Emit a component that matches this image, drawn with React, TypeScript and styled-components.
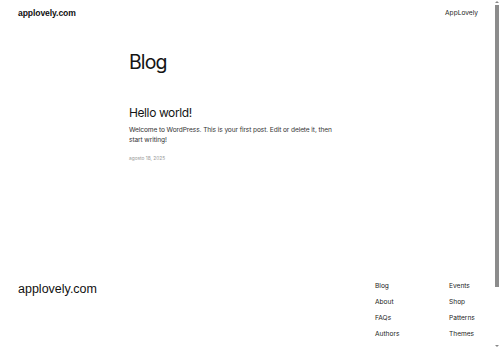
import { createGlobalStyle, styled } from "styled-components";

const GlobalStyle = createGlobalStyle`
  body {
    margin: 0;
    background: #fff;
    color: #111;
    font-family: Inter, "Noto Sans", sans-serif;
  }
`;

const Page = styled.div`
  position: relative;
  display: flex;
  flex-direction: column;
  height: 348px;
  overflow: hidden;
`;

const Header = styled.header`
  display: flex;
  justify-content: space-between;
  align-items: center;
  padding: 7px 22px 0 18px;
  height: 12px;
`;

const SiteTitle = styled.a<{ $large?: boolean }>`
  font-family: "Liberation Sans", Arial, sans-serif;
  font-size: ${(p) => (p.$large ? "12.5px" : "8.6px")};
  font-weight: ${(p) => (p.$large ? 500 : 700)};
  color: #111;
  text-decoration: none;
  letter-spacing: ${(p) => (p.$large ? "0" : "-0.1px")};
`;

const NavLink = styled.a`
  font-size: 6.6px;
  color: #222;
  text-decoration: none;
`;

const Main = styled.main`
  width: 244px;
  margin: 0 auto;
  padding: 32px 0 0 2px;
  flex: 1;
`;

const PageTitle = styled.h1`
  margin: 0;
  font-size: 19.5px;
  font-weight: 400;
  letter-spacing: -0.9px;
  line-height: 22px;
  color: #151515;
`;

const Post = styled.article`
  margin-top: 33px;
`;

const PostTitle = styled.h2`
  margin: 0;
  font-size: 12px;
  font-weight: 400;
  letter-spacing: -0.4px;
  line-height: 14px;
  color: #151515;
`;

const Excerpt = styled.p`
  margin: 5px 0 0;
  font-size: 6.6px;
  line-height: 10px;
  color: #333;
  width: 212px;
  letter-spacing: -0.1px;
`;

const PostDate = styled.time`
  display: block;
  margin-top: 10px;
  font-size: 4.8px;
  color: #999;
`;

const Footer = styled.footer`
  display: flex;
  justify-content: space-between;
  padding: 0 11px 0 18px;
  height: 77px;
`;

const FooterBrand = styled.div`
  padding-top: 6px;
`;

const FooterNav = styled.nav`
  display: grid;
  grid-template-columns: 74px 40px;
  row-gap: 8px;
  padding-top: 11px;
  align-content: start;
`;

const Scrollbar = styled.div`
  position: absolute;
  top: 0;
  right: 0;
  bottom: 0;
  width: 6px;
  display: flex;
  flex-direction: column;
  align-items: center;
  padding: 1px 0;
  box-sizing: border-box;
  background: #fff;
`;

const Arrow = styled.div<{ $down?: boolean }>`
  width: 0;
  height: 0;
  border-left: 2px solid transparent;
  border-right: 2px solid transparent;
  ${(p) =>
    p.$down
      ? "border-top: 2px solid #888; margin-top: auto;"
      : "border-bottom: 2px solid #888;"}
`;

const Thumb = styled.div`
  width: 4px;
  height: 282px;
  margin-top: 2px;
  background: #8c8c8c;
`;

const footerLinks = [
  "Blog",
  "Events",
  "About",
  "Shop",
  "FAQs",
  "Patterns",
  "Authors",
  "Themes",
];

export default function App() {
  return (
    <>
      <GlobalStyle />
      <Page>
        <Header>
          <SiteTitle href="#">applovely.com</SiteTitle>
          <NavLink href="#">AppLovely</NavLink>
        </Header>
        <Main>
          <PageTitle>Blog</PageTitle>
          <Post>
            <PostTitle>Hello world!</PostTitle>
            <Excerpt>
              Welcome to WordPress. This is your first post. Edit or delete it,
              then start writing!
            </Excerpt>
            <PostDate>agosto 18, 2025</PostDate>
          </Post>
        </Main>
        <Footer>
          <FooterBrand>
            <SiteTitle href="#" $large>
              applovely.com
            </SiteTitle>
          </FooterBrand>
          <FooterNav>
            {footerLinks.map((l) => (
              <NavLink key={l} href="#">
                {l}
              </NavLink>
            ))}
          </FooterNav>
        </Footer>
        <Scrollbar>
          <Arrow />
          <Thumb />
          <Arrow $down />
        </Scrollbar>
      </Page>
    </>
  );
}
